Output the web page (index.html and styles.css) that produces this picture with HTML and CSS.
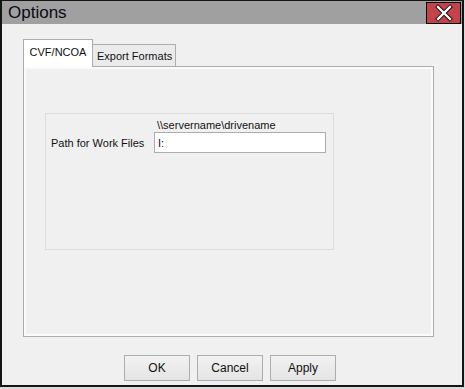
FILE: index.html
```html
<!DOCTYPE html>
<html lang="en">
<head>
  <meta charset="UTF-8">
  <title>Options</title>
  <link rel="stylesheet" href="styles.css">
</head>
<body>
  <div class="window">
    <div class="title-bar">
      <div class="title">Options</div>
      <div class="close-btn">
        <svg width="18" height="18" viewBox="0 0 18 18">
          <path d="M3 3 L15 15 M15 3 L3 15" stroke="#000" stroke-width="4" stroke-linecap="square"/>
          <path d="M3 3 L15 15 M15 3 L3 15" stroke="#fff" stroke-width="2.4" stroke-linecap="square"/>
        </svg>
      </div>
    </div>
    <div class="content">
      <div class="tabs">
        <div class="tab active">CVF/NCOA</div>
        <div class="tab">Export Formats</div>
      </div>
      <div class="tab-panel">
        <div class="group">
          <div class="hint">\\servername\drivename</div>
          <div class="field-row">
            <label class="field-label">Path for Work Files</label>
            <input class="field-input" type="text" value="I:">
          </div>
        </div>
      </div>
      <div class="buttons">
        <button class="btn">OK</button>
        <button class="btn">Cancel</button>
        <button class="btn">Apply</button>
      </div>
    </div>
  </div>
</body>
</html>
```

FILE: styles.css
```css
body {
  margin: 0;
  background-color: #d9d9d9;
  font-family: "Liberation Sans", Arial, sans-serif;
  font-size: 11px;
  color: #111;
}

.window {
  width: 464px;
  height: 387px;
  box-sizing: border-box;
  border: 2px solid #141414;
  border-top-width: 1px;
  background-color: #f0f0f0;
  display: flex;
  flex-direction: column;
}

.title-bar {
  height: 23px;
  background-color: #a0a0a0;
  display: flex;
  align-items: center;
  justify-content: space-between;
}

.title {
  font-size: 17px;
  padding-left: 6px;
  color: #0a0a14;
}

.close-btn {
  width: 35px;
  height: 22px;
  margin-right: 1px;
  box-sizing: border-box;
  border: 1px solid #000;
  background-color: #c4424a;
  display: flex;
  align-items: center;
  justify-content: center;
}

.content {
  padding: 15px 0 0 21px;
}

.tabs {
  display: flex;
  align-items: flex-end;
  height: 27px;
}

.tab {
  box-sizing: border-box;
  border: 1px solid #adadad;
  border-bottom: none;
  background-color: #ebebeb;
  height: 22px;
  padding: 0 4px;
  display: flex;
  align-items: center;
  white-space: nowrap;
}

.tab.active {
  background-color: #fff;
  height: 28px;
  width: 70px;
  justify-content: center;
  margin-bottom: -1px;
  position: relative;
  z-index: 1;
  padding-bottom: 3px;
}

.tab:not(.active) {
  width: 83px;
  border-left: none;
}

.tab-panel {
  width: 411px;
  height: 271px;
  box-sizing: border-box;
  border: 1px solid #adadad;
  box-shadow: inset 0 0 0 2px #fbfbfb;
  padding: 46px 0 0 21px;
}

.group {
  width: 289px;
  height: 137px;
  box-sizing: border-box;
  border: 1px solid #dcdcdc;
  padding: 4px 0 0 5px;
}

.hint {
  padding-left: 106px;
  height: 14px;
  line-height: 14px;
}

.field-row {
  display: flex;
  align-items: center;
}

.field-label {
  width: 103px;
}

.field-input {
  width: 172px;
  height: 21px;
  box-sizing: border-box;
  border: 1px solid #abadb3;
  padding: 0 3px;
  margin: 0;
  font-family: inherit;
  font-size: 11px;
  color: #111;
  background: #fff;
}

.buttons {
  display: flex;
  gap: 7px;
  margin: 18px 0 0 101px;
}

.btn {
  width: 66px;
  height: 26px;
  border: 1px solid #adadad;
  background: linear-gradient(#f2f2f2, #e4e4e4);
  font-family: inherit;
  font-size: 12px;
  color: #111;
  padding: 0;
}
```
